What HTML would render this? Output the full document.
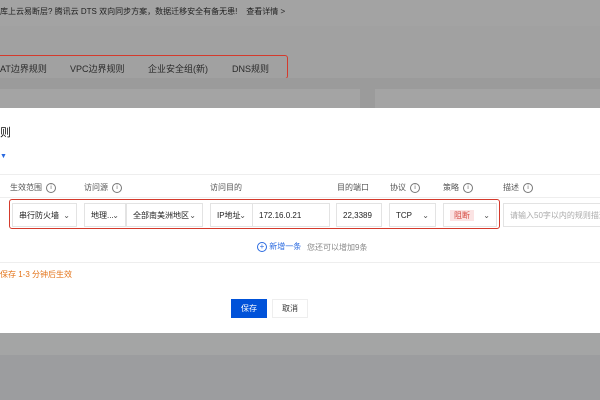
<!DOCTYPE html>
<html><head><meta charset="utf-8"><style>
body{margin:0;width:600px;height:400px;overflow:hidden;position:relative;background:#9c9d9f;font-family:"Liberation Sans","Noto Sans CJK SC",sans-serif;}
.a{position:absolute}
.t{font-size:8px;color:#333;white-space:nowrap}
.box{position:absolute;border:1px solid #e3e3e3;background:#fff;height:24px;top:203px;font-size:8px;color:#222;line-height:24px;padding-left:6px;box-sizing:border-box;white-space:nowrap}
.ch{position:absolute;right:6px;top:0;color:#555;font-size:8px}
.lb{position:absolute;top:182px;font-size:8px;color:#555;white-space:nowrap}
.i{display:inline-block;width:8px;height:8px;border:1px solid #777;border-radius:50%;font-size:6px;line-height:8px;text-align:center;margin-left:4px;vertical-align:middle}
</style></head><body>
<div class="a" style="left:0;top:0;width:600px;height:26px;background:#a3a3a3"></div>
<div class="a t" style="left:0;top:6px;font-size:8px;color:#222">库上云易断层? 腾讯云 DTS 双向同步方案，数据迁移安全有备无患!&nbsp;&nbsp;&nbsp; 查看详情 &gt;</div>
<div class="a" style="left:0;top:26px;width:600px;height:52px;background:#a1a1a1"></div>
<div class="a" style="left:-4px;top:55px;width:290px;height:22px;border:1.5px solid #d43a2c;border-radius:3px"></div>
<div class="a t" style="left:0;top:62px;font-size:9px;color:#2a2a2a">AT边界规则</div>
<div class="a t" style="left:70px;top:62px;font-size:9px;color:#2a2a2a">VPC边界规则</div>
<div class="a t" style="left:148px;top:62px;font-size:9px;color:#2a2a2a">企业安全组(新)</div>
<div class="a t" style="left:232px;top:62px;font-size:9px;color:#2a2a2a">DNS规则</div>
<div class="a" style="left:0;top:78px;width:600px;height:30px;background:#9b9b9b"></div>
<div class="a" style="left:0;top:89px;width:360px;height:19px;background:#a4a4a4"></div>
<div class="a" style="left:375px;top:89px;width:225px;height:19px;background:#a4a4a4"></div>
<div class="a" style="left:0;top:333px;width:600px;height:22px;background:#a4a5a5"></div>
<div class="a" style="left:0;top:108px;width:600px;height:225px;background:#fff"></div>
<div class="a t" style="left:0;top:124px;font-size:11px;color:#111">则</div>
<div class="a t" style="left:0;top:153px;font-size:7px;color:#2a6ae0">▼</div>
<div class="a" style="left:0;top:174px;width:600px;height:1px;background:#eee"></div>
<div class="a" style="left:0;top:197px;width:600px;height:1px;background:#eee"></div>
<div class="lb" style="left:10px">生效范围<span class="i">i</span></div>
<div class="lb" style="left:84px">访问源<span class="i">i</span></div>
<div class="lb" style="left:210px">访问目的</div>
<div class="lb" style="left:337px">目的端口</div>
<div class="lb" style="left:390px">协议<span class="i">i</span></div>
<div class="lb" style="left:443px">策略<span class="i">i</span></div>
<div class="lb" style="left:503px">描述<span class="i">i</span></div>
<div class="box" style="left:12px;width:65px">串行防火墙<span class="ch">⌄</span></div>
<div class="box" style="left:84px;width:42px">地理...<span class="ch">⌄</span></div>
<div class="box" style="left:126px;width:77px">全部南美洲地区<span class="ch">⌄</span></div>
<div class="box" style="left:210px;width:43px">IP地址<span class="ch">⌄</span></div>
<div class="box" style="left:252px;width:78px">172.16.0.21</div>
<div class="box" style="left:336px;width:46px">22,3389</div>
<div class="box" style="left:389px;width:47px">TCP<span class="ch">⌄</span></div>
<div class="box" style="left:443px;width:54px"><span style="background:#fbe3e3;color:#d54941;padding:1px 4px">阻断</span><span class="ch">⌄</span></div>
<div class="box" style="left:503px;width:110px;color:#aaa">请输入50字以内的规则描述</div>
<div class="a" style="left:9px;top:199px;width:491px;height:30px;border:1.5px solid #d43a2c;border-radius:3px;box-sizing:border-box"></div>
<div class="a t" style="left:257px;top:241px;color:#2a6ae0"><span style="display:inline-block;width:8px;height:8px;border:1px solid #2a6ae0;border-radius:50%;font-size:8px;line-height:8px;text-align:center">+</span> 新增一条</div>
<div class="a t" style="left:307px;top:242px;color:#888">您还可以增加9条</div>
<div class="a" style="left:0;top:262px;width:600px;height:1px;background:#eee"></div>
<div class="a t" style="left:0;top:269px;color:#e37318">保存 1-3 分钟后生效</div>
<div class="a" style="left:231px;top:299px;width:36px;height:19px;background:#0052d9;color:#fff;font-size:8px;line-height:19px;text-align:center">保存</div>
<div class="a" style="left:272px;top:299px;width:36px;height:19px;background:#fff;border:1px solid #eee;box-sizing:border-box;color:#333;font-size:8px;line-height:17px;text-align:center">取消</div>
</body></html>
